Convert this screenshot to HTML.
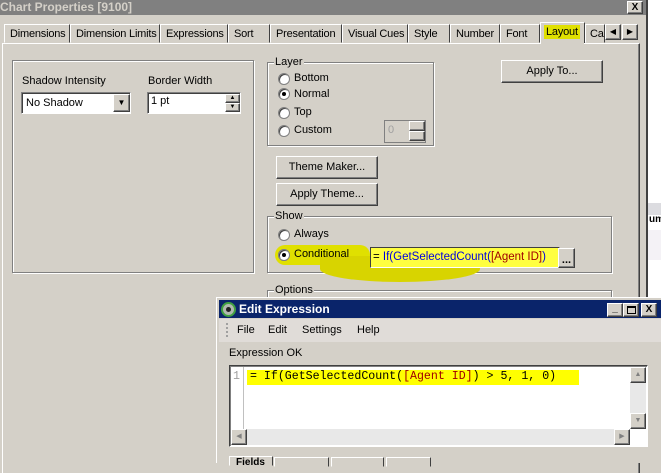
<!DOCTYPE html>
<html><head><style>
*{box-sizing:border-box;margin:0;padding:0}
body{width:661px;height:463px;overflow:hidden;background:#d4d0c8;font-family:"Liberation Sans",sans-serif;font-size:11px;color:#000;position:relative}
.a{position:absolute}
.btn{position:absolute;background:#d4d0c8;border:1px solid;border-color:#fff #404040 #404040 #fff;box-shadow:inset -1px -1px #808080;text-align:center}
.grp{position:absolute;border:1px solid #808080;box-shadow:1px 1px #fff,inset 1px 1px #fff}
.lg{position:absolute;top:-8px;left:6px;background:#d4d0c8;padding:0 1px}
.rad{position:absolute;width:12px;height:12px;border-radius:50%;background:#fff;border:1px solid #808080;box-shadow:inset 1px 1px #404040}
.dot{position:absolute;left:3px;top:3px;width:4px;height:4px;border-radius:50%;background:#000}
.tab{position:absolute;top:24px;height:19px;border:1px solid;border-color:#fff #404040 transparent #fff;padding:3px 0 0 5px;white-space:nowrap;overflow:hidden;letter-spacing:-0.2px}
.sunk{position:absolute;background:#fff;border:1px solid;border-color:#808080 #fff #fff #808080;box-shadow:inset 1px 1px #404040}
</style></head><body>
<div class="a" style="left:648px;top:0;width:13px;height:463px;background:#fff"></div>
<div class="a" style="left:648px;top:203px;width:13px;height:12px;background:#dcdce0"></div>
<div class="a" style="left:649px;top:214px;font-size:10px;font-weight:bold">um</div>
<div class="a" style="left:648px;top:230px;width:13px;height:30px;background:#f4f2f6"></div>
<div class="a" style="left:646px;top:0;width:2px;height:463px;background:#404040"></div>
<div class="a" style="left:0;top:0;width:646px;height:15px;background:#808080;color:#d4d0c8;font-weight:bold;font-size:12px;line-height:14px">Chart Properties [9100]</div>
<div class="btn" style="left:627px;top:1px;width:16px;height:13px;font-size:10px;font-weight:bold;line-height:11px">X</div>
<div class="tab" style="left:4px;width:66px">Dimensions</div>
<div class="tab" style="left:70px;width:90px">Dimension Limits</div>
<div class="tab" style="left:160px;width:68px">Expressions</div>
<div class="tab" style="left:228px;width:42px">Sort</div>
<div class="tab" style="left:270px;width:72px">Presentation</div>
<div class="tab" style="left:342px;width:66px">Visual Cues</div>
<div class="tab" style="left:408px;width:42px">Style</div>
<div class="tab" style="left:450px;width:50px">Number</div>
<div class="tab" style="left:500px;width:40px">Font</div>
<div class="tab" style="left:540px;top:22px;height:22px;width:45px;background:#d4d0c8;padding:3px 0 0 3px"><span style="background:#e0e000;padding:1px 2px">Layout</span></div>
<div class="tab" style="left:585px;width:20px;padding-left:4px">Ca</div>
<div class="btn" style="left:605px;top:24px;width:16px;height:16px;font-size:8px;line-height:14px">◀</div>
<div class="btn" style="left:622px;top:24px;width:16px;height:16px;font-size:8px;line-height:14px">▶</div>
<div class="a" style="left:2px;top:43px;width:638px;height:430px;border-left:1px solid #fff;border-top:1px solid #fff;border-right:1px solid #404040;box-shadow:inset -1px 0 #808080"></div>
<div class="a" style="left:541px;top:43px;width:43px;height:2px;background:#d4d0c8"></div>
<div class="grp" style="left:12px;top:60px;width:242px;height:213px"></div>
<div class="a" style="left:22px;top:75px">Shadow Intensity</div>
<div class="a" style="left:148px;top:75px">Border Width</div>
<div class="sunk" style="left:21px;top:92px;width:110px;height:22px;padding:4px 0 0 4px">No Shadow</div>
<div class="btn" style="left:113px;top:94px;width:17px;height:18px;font-size:8px;line-height:16px">▼</div>
<div class="sunk" style="left:147px;top:92px;width:94px;height:22px;padding:2px 0 0 3px">1 pt</div>
<div class="btn" style="left:225px;top:94px;width:15px;height:9px;font-size:6px;line-height:7px">▲</div>
<div class="btn" style="left:225px;top:103px;width:15px;height:9px;font-size:6px;line-height:7px">▼</div>
<div class="grp" style="left:267px;top:62px;width:167px;height:84px"><span class="lg" style="top:-7px">Layer</span></div>
<div class="rad" style="left:278px;top:73px"></div><div class="a" style="left:294px;top:72px">Bottom</div>
<div class="rad" style="left:278px;top:88px"><div class="dot"></div></div><div class="a" style="left:294px;top:88px">Normal</div>
<div class="rad" style="left:278px;top:107px"></div><div class="a" style="left:294px;top:106px">Top</div>
<div class="rad" style="left:278px;top:125px"></div><div class="a" style="left:294px;top:124px">Custom</div>
<div class="a" style="left:384px;top:120px;width:42px;height:23px;border:1px solid #808080;color:#a0a0a0;padding:3px 0 0 3px">0</div>
<div class="btn" style="left:409px;top:121px;width:16px;height:10px"></div>
<div class="btn" style="left:409px;top:131px;width:16px;height:10px"></div>
<div class="btn" style="left:501px;top:60px;width:102px;height:23px;line-height:21px">Apply To...</div>
<div class="btn" style="left:276px;top:156px;width:102px;height:23px;line-height:21px">Theme Maker...</div>
<div class="btn" style="left:276px;top:183px;width:102px;height:23px;line-height:21px">Apply Theme...</div>
<div class="grp" style="left:267px;top:216px;width:345px;height:57px"><span class="lg" style="top:-7px">Show</span></div>
<div class="a" style="left:275px;top:245px;width:95px;height:20px;border-radius:10px;background:#e0e000"></div>
<div class="a" style="left:320px;top:256px;width:160px;height:26px;border-radius:0 0 50% 50%;background:#d8d400"></div>
<div class="rad" style="left:278px;top:249px"></div><div class="a" style="left:294px;top:228px">Always</div>
<div class="rad" style="left:278px;top:229px"></div>
<div class="rad" style="left:278px;top:249px"><div class="dot"></div></div><div class="a" style="left:294px;top:248px">Conditional</div>
<div class="a" style="left:370px;top:247px;width:190px;height:21px;background:#ffff40;border:1px solid;border-color:#404040 #fff #fff #404040;padding:3px 0 0 2px;white-space:nowrap;overflow:hidden;color:#0000e0;font-size:11.5px"><span style="color:#000">=</span> If(GetSelectedCount(<span style="color:#a00000">[Agent ID]</span>)</div>
<div class="btn" style="left:558px;top:248px;width:17px;height:20px;font-weight:bold;line-height:22px">...</div>
<div class="grp" style="left:267px;top:290px;width:345px;height:60px"><span class="lg" style="top:-7px">Options</span></div>
<div class="a" style="left:216px;top:297px;width:445px;height:166px;background:#d4d0c8;border-left:1px solid #fff;border-top:1px solid #fff"></div>
<div class="a" style="left:219px;top:300px;width:442px;height:18px;background:#0a246a;color:#fff;font-weight:bold;font-size:12px;line-height:18px;padding-left:20px">Edit Expression</div>
<div class="a" style="left:221px;top:302px;width:15px;height:15px;border-radius:50%;background:#b0b8b0;border:2px solid #40a040"><div style="position:absolute;left:3px;top:3px;width:5px;height:5px;border-radius:50%;background:#202020"></div></div>
<div class="btn" style="left:607px;top:303px;width:16px;height:14px;font-size:10px;line-height:10px;font-weight:bold">_</div>
<div class="btn" style="left:623px;top:303px;width:16px;height:14px"><div style="position:absolute;left:3px;top:2px;width:9px;height:8px;border:1px solid #000;border-top-width:2px"></div></div>
<div class="btn" style="left:641px;top:303px;width:16px;height:14px;font-size:10px;font-weight:bold;line-height:12px">X</div>
<div class="a" style="left:219px;top:319px;width:442px;height:23px;background:#e0dcd8"></div>
<div class="a" style="left:226px;top:323px;width:1px;height:14px;border-left:2px dotted #a0a0a0"></div>
<div class="a" style="left:237px;top:324px">File</div>
<div class="a" style="left:268px;top:324px">Edit</div>
<div class="a" style="left:302px;top:324px">Settings</div>
<div class="a" style="left:357px;top:324px">Help</div>
<div class="a" style="left:229px;top:347px">Expression OK</div>
<div class="a" style="left:229px;top:365px;width:419px;height:82px;background:#fff;border:1px solid;border-color:#404040 #fff #fff #404040;box-shadow:inset 1px 1px #808080"></div>
<div class="a" style="left:231px;top:367px;width:13px;height:62px;background:#fff;border-right:1px solid #c0c0c0"></div>
<div class="a" style="left:233px;top:370px;font-family:'Liberation Mono',monospace;font-size:11.6px;color:#a0a0a0">1</div>
<div class="a" style="left:247px;top:370px;width:332px;height:15px;background:#ffff00"></div>
<div class="a" style="left:250px;top:370px;font-family:'Liberation Mono',monospace;font-size:11.6px;white-space:nowrap">= If(GetSelectedCount(<span style="color:#a00000">[Agent ID]</span>) &gt; 5, 1, 0)</div>
<div class="a" style="left:630px;top:367px;width:16px;height:62px;background:#e8e8e8"></div>
<div class="btn" style="left:630px;top:367px;width:16px;height:16px;font-size:7px;line-height:14px;color:#808080">▲</div>
<div class="btn" style="left:630px;top:413px;width:16px;height:16px;font-size:7px;line-height:14px;color:#808080">▼</div>
<div class="a" style="left:231px;top:429px;width:399px;height:16px;background:#e8e8e8"></div>
<div class="btn" style="left:231px;top:429px;width:16px;height:16px;font-size:7px;line-height:14px;color:#808080">◀</div>
<div class="btn" style="left:614px;top:429px;width:16px;height:16px;font-size:7px;line-height:14px;color:#808080">▶</div>
<div class="a" style="left:229px;top:456px;width:44px;height:10px;border:1px solid;border-color:#fff #404040 transparent #fff;font-size:10px;padding-left:6px;font-weight:bold">Fields</div>
<div class="a" style="left:274px;top:457px;width:55px;height:10px;border:1px solid;border-color:#fff #404040 transparent #fff"></div>
<div class="a" style="left:331px;top:457px;width:53px;height:10px;border:1px solid;border-color:#fff #404040 transparent #fff"></div>
<div class="a" style="left:386px;top:457px;width:45px;height:10px;border:1px solid;border-color:#fff #404040 transparent #fff"></div>
</body></html>
